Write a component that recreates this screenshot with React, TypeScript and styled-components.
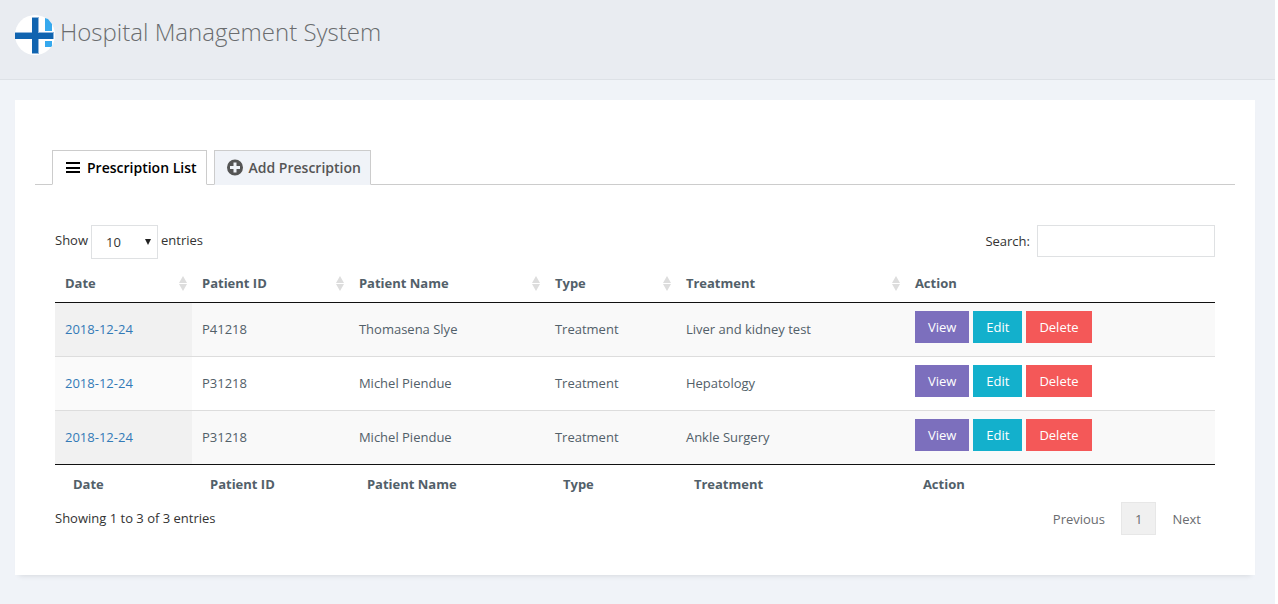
import React from "react";
import styled, { createGlobalStyle } from "styled-components";

const GlobalStyle = createGlobalStyle`
  *, *::before, *::after { box-sizing: border-box; }
  body {
    margin: 0;
    background: #fff;
    color: #333;
    font: 13px/20px "Open Sans", "Noto Sans", sans-serif;
  }
  button, input, select { font: inherit; }
  a { text-decoration: none; }
`;

const Page = styled.div`
  display: flow-root;
  min-height: 100vh;
  margin-right: 3px;
  background: #f0f3f8;
`;

const Header = styled.header`
  display: flex;
  align-items: flex-start;
  gap: 5px;
  height: 80px;
  padding: 15px;
  background: #e9ecf1;
  border-bottom: 1px solid #dde1e6;
`;

const Logo = styled.svg`
  width: 40px;
  height: 40px;
`;

const Title = styled.h1`
  margin: 0;
  font-size: 24px;
  line-height: 34px;
  font-weight: 300;
  color: #6a6c6f;
`;

const Card = styled.main`
  margin: 20px 20px 20px 15px;
  padding: 50px 20px 40px;
  background: #fff;
  box-shadow: 0 5px 5px -4px rgba(0, 0, 0, 0.1);
`;

const TabBar = styled.nav`
  display: flex;
  gap: 7px;
  padding: 0 17px;
  border-bottom: 1px solid #ccc;
`;

const Tab = styled.button<{ $active?: boolean }>`
  display: flex;
  align-items: center;
  gap: 5px;
  height: 35px;
  margin-bottom: -1px;
  padding: 0 9px 0 12px;
  border: 1px solid #ccc;
  border-bottom-color: ${(p) => (p.$active ? "#fff" : "#f0f3f8")};
  background: ${(p) => (p.$active ? "#fff" : "#f0f3f8")};
  color: ${(p) => (p.$active ? "#000" : "#555")};
  font-size: 14px;
  font-weight: 600;
`;

const TabIcon = styled.svg`
  width: 17px;
  height: 17px;
  fill: currentColor;
`;

const Panel = styled.section`
  padding: 40px 20px 0;
`;

const Controls = styled.div`
  display: flex;
  justify-content: space-between;
  align-items: flex-start;
`;

const LengthLabel = styled.label`
  display: flex;
  align-items: flex-start;
  gap: 3px;
  line-height: 30px;
`;

const SelectWrap = styled.span`
  display: grid;
  align-items: center;
`;

const LengthSelect = styled.select`
  grid-area: 1 / 1;
  width: 67px;
  height: 34px;
  padding: 0 14px;
  border: 1px solid #dfe1e3;
  border-radius: 0;
  background: #fff;
  color: #333;
  appearance: none;
`;

const Caret = styled.svg`
  grid-area: 1 / 1;
  justify-self: end;
  width: 6px;
  height: 6px;
  margin-right: 7px;
  pointer-events: none;
  fill: #222;
`;

const SearchLabel = styled.label`
  display: flex;
  align-items: center;
  gap: 7px;
`;

const SearchInput = styled.input`
  width: 178px;
  height: 32px;
  padding: 0 8px;
  border: 1px solid #dfe1e3;
  border-radius: 0;
`;

const Table = styled.table`
  width: 100%;
  table-layout: fixed;
  border-collapse: separate;
  border-spacing: 0;
  color: #526069;
  text-align: left;
`;

const HeadCell = styled.th`
  height: 44px;
  padding: 5px 4px 0 10px;
  border-bottom: 1px solid #111;
`;

const HeadContent = styled.div`
  display: flex;
  justify-content: space-between;
  align-items: center;
`;

const SortIcon = styled.svg`
  width: 10px;
  height: 16px;
  fill: #ddd;
`;

const Cell = styled.td`
  height: 54px;
  padding: 0 10px 2px;
  border-top: 1px solid #ddd;
`;

const Row = styled.tr`
  background: #fff;
  &:nth-child(odd) { background: #f9f9f9; }
  &:first-child > ${Cell} { height: 53px; border-top: 0; }
  > ${Cell}:first-child { background: #fafafa; }
  &:nth-child(odd) > ${Cell}:first-child { background: #f1f1f1; }
`;

const DateLink = styled.a`
  color: #337ab7;
`;

const Actions = styled.div`
  display: flex;
  gap: 4px;
  padding-bottom: 4px;
`;

const ActionButton = styled.button<{ $color: string }>`
  height: 32px;
  padding: 0 13px;
  border: 0;
  background: ${(p) => p.$color};
  color: #fff;
  font-weight: 500;
`;

const FootCell = styled.th`
  height: 38px;
  padding: 0 18px;
  border-top: 1px solid #111;
`;

const Footer = styled.footer`
  display: flex;
  justify-content: space-between;
  align-items: flex-start;
  line-height: 32px;
`;

const Pager = styled.nav`
  display: flex;
  gap: 2px;
`;

const PageButton = styled.button<{ $current?: boolean }>`
  height: 33px;
  padding: 0 13px;
  border: 1px solid ${(p) => (p.$current ? "#e7e7e7" : "transparent")};
  background: ${(p) => (p.$current ? "#f0f0f0" : "transparent")};
  color: #6a6c6f;
`;

const columns = [
  { name: "Date", width: "11.81%" },
  { name: "Patient ID", width: "13.53%" },
  { name: "Patient Name", width: "16.9%" },
  { name: "Type", width: "11.29%" },
  { name: "Treatment", width: "19.74%" },
  { name: "Action", width: "26.73%" },
];

const prescriptions = [
  { date: "2018-12-24", id: "P41218", name: "Thomasena Slye", type: "Treatment", treatment: "Liver and kidney test" },
  { date: "2018-12-24", id: "P31218", name: "Michel Piendue", type: "Treatment", treatment: "Hepatology" },
  { date: "2018-12-24", id: "P31218", name: "Michel Piendue", type: "Treatment", treatment: "Ankle Surgery" },
];

export default function App() {
  return (
    <Page>
      <GlobalStyle />
      <Header>
        <Logo viewBox="0 0 40 40" aria-hidden="true">
          <circle cx="20" cy="20" r="20" fill="#fff" />
          <path d="M30 3l3 1l4 5v7h-7zM30 26h7v5l-1 1h-6z" fill="#36a9ee" />
          <path d="M17 2h7v37h-7zM0 17h39v7H0z" fill="#8fb6dc" />
          <path d="M17 3h6v35h-6zM0 18h38v6H0z" fill="#1064b0" />
        </Logo>
        <Title>Hospital Management System</Title>
      </Header>
      <Card>
        <TabBar>
          <Tab type="button" $active>
            <TabIcon viewBox="0 0 17 17" aria-hidden="true">
              <path d="M1 3h14v2H1zM1 8h14v2H1zM1 12h14v2H1z" />
            </TabIcon>
            Prescription List
          </Tab>
          <Tab type="button">
            <TabIcon viewBox="0 0 17 17" aria-hidden="true">
              <path
                fillRule="evenodd"
                d="M8 .5a8 8 0 1 0 0 16a8 8 0 1 0 0-16zM6.500 3.500h3V7H13v3H9.500v3.500h-3V10H3V7h3.500z"
              />
            </TabIcon>
            Add Prescription
          </Tab>
        </TabBar>
        <Panel>
          <Controls>
            <LengthLabel>
              Show
              <SelectWrap>
                <LengthSelect defaultValue="10">
                  <option>10</option>
                  <option>25</option>
                  <option>50</option>
                  <option>100</option>
                </LengthSelect>
                <Caret viewBox="0 0 6 6" aria-hidden="true">
                  <path d="M0 0h6L3 6z" />
                </Caret>
              </SelectWrap>
              entries
            </LengthLabel>
            <SearchLabel>
              Search:
              <SearchInput type="search" />
            </SearchLabel>
          </Controls>
          <Table>
            <colgroup>
              {columns.map((c) => (
                <col key={c.name} width={c.width} />
              ))}
            </colgroup>
            <thead>
              <tr>
                {columns.map((c) => (
                  <HeadCell key={c.name} scope="col">
                    <HeadContent>
                      {c.name}
                      {c.name !== "Action" && (
                        <SortIcon viewBox="0 0 10 16" aria-hidden="true">
                          <path d="M5 1l4 7H1zM1 9h8l-4 7z" />
                        </SortIcon>
                      )}
                    </HeadContent>
                  </HeadCell>
                ))}
              </tr>
            </thead>
            <tbody>
              {prescriptions.map((p, i) => (
                <Row key={i}>
                  <Cell><DateLink href="#">{p.date}</DateLink></Cell>
                  <Cell>{p.id}</Cell>
                  <Cell>{p.name}</Cell>
                  <Cell>{p.type}</Cell>
                  <Cell>{p.treatment}</Cell>
                  <Cell>
                    <Actions>
                      <ActionButton type="button" $color="#7c6fbd">View</ActionButton>
                      <ActionButton type="button" $color="#13b0cc">Edit</ActionButton>
                      <ActionButton type="button" $color="#f45858">Delete</ActionButton>
                    </Actions>
                  </Cell>
                </Row>
              ))}
            </tbody>
            <tfoot>
              <tr>
                {columns.map((c) => (
                  <FootCell key={c.name}>{c.name}</FootCell>
                ))}
              </tr>
            </tfoot>
          </Table>
          <Footer>
            <span>Showing 1 to 3 of 3 entries</span>
            <Pager aria-label="Pages">
              <PageButton type="button">Previous</PageButton>
              <PageButton type="button" $current>1</PageButton>
              <PageButton type="button">Next</PageButton>
            </Pager>
          </Footer>
        </Panel>
      </Card>
    </Page>
  );
}
